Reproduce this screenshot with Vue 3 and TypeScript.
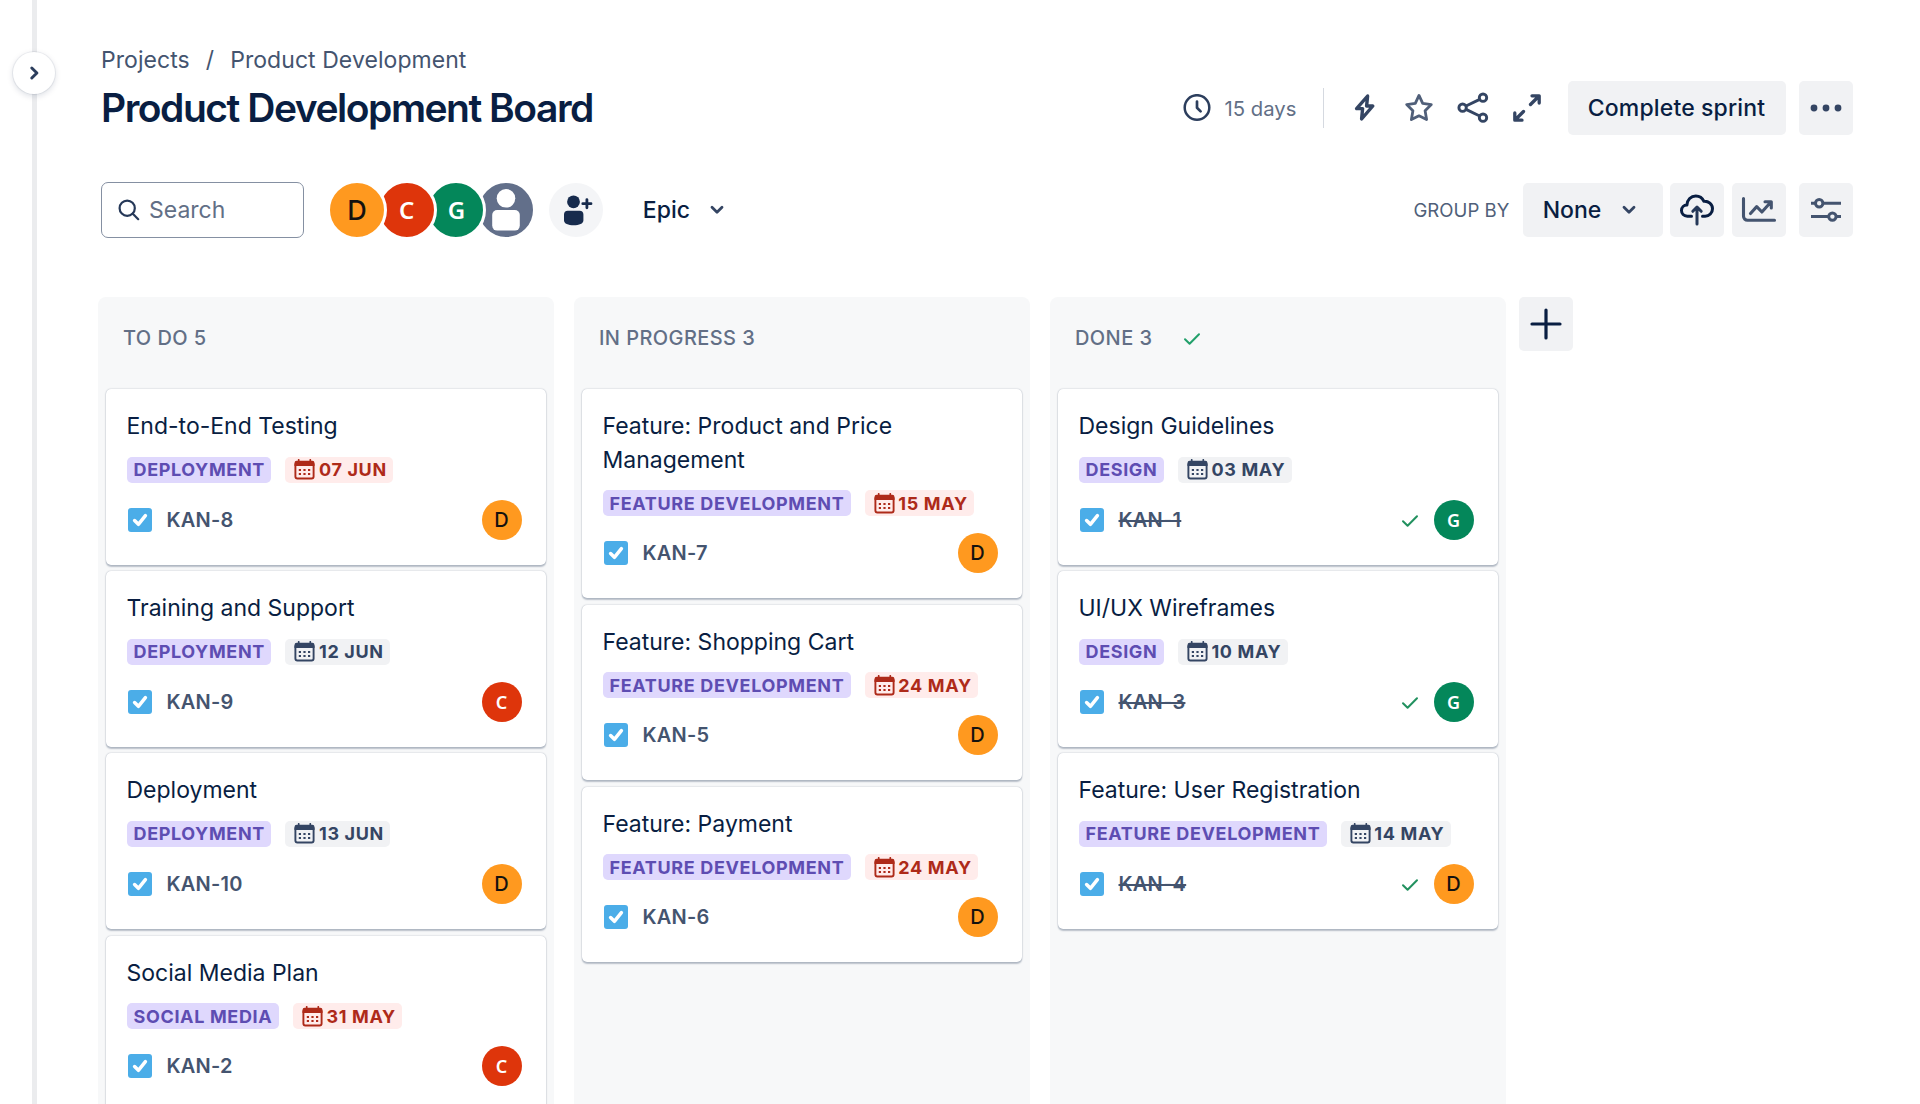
<script setup lang="ts">
interface Card {
  title: string
  epic: string
  date: string
  overdue?: boolean
  id: string
  who: 'D' | 'C' | 'G'
  done?: boolean
}
interface Column {
  name: string
  count: number
  done?: boolean
  cards: Card[]
}

const columns: Column[] = [
  {
    name: 'TO DO',
    count: 5,
    cards: [
      { title: 'End-to-End Testing', epic: 'DEPLOYMENT', date: '07 JUN', overdue: true, id: 'KAN-8', who: 'D' },
      { title: 'Training and Support', epic: 'DEPLOYMENT', date: '12 JUN', id: 'KAN-9', who: 'C' },
      { title: 'Deployment', epic: 'DEPLOYMENT', date: '13 JUN', id: 'KAN-10', who: 'D' },
      { title: 'Social Media Plan', epic: 'SOCIAL MEDIA', date: '31 MAY', overdue: true, id: 'KAN-2', who: 'C' },
    ],
  },
  {
    name: 'IN PROGRESS',
    count: 3,
    cards: [
      { title: 'Feature: Product and Price Management', epic: 'FEATURE DEVELOPMENT', date: '15 MAY', overdue: true, id: 'KAN-7', who: 'D' },
      { title: 'Feature: Shopping Cart', epic: 'FEATURE DEVELOPMENT', date: '24 MAY', overdue: true, id: 'KAN-5', who: 'D' },
      { title: 'Feature: Payment', epic: 'FEATURE DEVELOPMENT', date: '24 MAY', overdue: true, id: 'KAN-6', who: 'D' },
    ],
  },
  {
    name: 'DONE',
    count: 3,
    done: true,
    cards: [
      { title: 'Design Guidelines', epic: 'DESIGN', date: '03 MAY', id: 'KAN-1', who: 'G', done: true },
      { title: 'UI/UX Wireframes', epic: 'DESIGN', date: '10 MAY', id: 'KAN-3', who: 'G', done: true },
      { title: 'Feature: User Registration', epic: 'FEATURE DEVELOPMENT', date: '14 MAY', id: 'KAN-4', who: 'D', done: true },
    ],
  },
]
</script>

<template>
  <div class="page">
    <aside class="rail">
      <div class="rail-line"></div>
      <button class="toggle" aria-label="Expand sidebar">
        <svg width="12" height="16" viewBox="0 0 12 16"><path d="M3.8 3 8.9 8 3.800 13" fill="none" stroke="#2c3e5d" stroke-width="3" stroke-linecap="round" stroke-linejoin="round" /></svg>
      </button>
    </aside>

    <main class="main">
      <nav class="crumbs"><span>Projects</span><span class="slash">/</span><span>Product Development</span></nav>

      <header class="head">
        <h1>Product Development Board</h1>
        <div class="head-actions">
          <svg class="clock" width="28" height="28" viewBox="0 0 28 28" fill="none" stroke="#2c3e5d" stroke-linecap="round" stroke-linejoin="round"><circle cx="14" cy="13.500" r="12.300" stroke-width="2.500" /><path d="M14 7.500v6.300l3.600 3.600" stroke-width="2.700" /></svg>
          <span class="days">15 days</span>
          <i class="divider"></i>
          <svg class="bolt" width="22" height="30" viewBox="0 0 22 30" fill="none" stroke="#344563" stroke-width="3.400" stroke-linejoin="round"><path d="M13.600 3 2.600 15.600h6L7.600 26 18.800 13h-6.200z" /></svg>
          <svg class="star" width="30" height="30" viewBox="0 0 30 30" fill="none" stroke="#505f79" stroke-width="2.800" stroke-linejoin="round"><path d="m15 2.400 3.700 8 8.600 1.200-6.200 6.200 1.500 8.800L15 22.800l-7.600 3.800 1.500-8.800-6.200-6.200 8.600-1.200z" /></svg>
          <svg class="share" width="32" height="32" viewBox="0 0 32 32" fill="none" stroke="#344563" stroke-width="2.900"><circle cx="5.600" cy="15.700" r="3.700" /><circle cx="26" cy="5.700" r="3.700" /><circle cx="26" cy="25.700" r="3.700" /><path d="m9 14 13.700-6.600M9 17.400l13.700 6.600" /></svg>
          <svg class="expand" width="30" height="30" viewBox="0 0 30 30" fill="none" stroke="#344563" stroke-width="3.300" stroke-linecap="round" stroke-linejoin="round"><path d="M18.500 11.500 26 4M20 2.800h7.200V10M11.500 18.500 4 26M10 27.200H2.800V20" /></svg>
          <button class="btn sprint">Complete sprint</button>
          <button class="btn square" aria-label="More">
            <svg width="32" height="8" viewBox="0 0 32 8" fill="#344563"><circle cx="4" cy="4" r="3.400" /><circle cx="16" cy="4" r="3.400" /><circle cx="28" cy="4" r="3.400" /></svg>
          </button>
        </div>
      </header>

      <section class="tools">
        <div class="search">
          <svg width="22" height="22" viewBox="0 0 22 22" fill="none" stroke="#253858" stroke-width="2.200" stroke-linecap="round"><circle cx="9.200" cy="9.200" r="7.600" /><path d="m14.800 14.800 5.400 5.400" /></svg>
          <span>Search</span>
        </div>
        <div class="people">
          <span class="person D">D</span>
          <span class="person C">C</span>
          <span class="person G">G</span>
          <span class="person none">
            <svg width="54" height="54" viewBox="0 0 54 54" fill="#fff"><circle cx="27" cy="15.300" r="9.300" /><rect x="13.200" y="27" width="27.600" height="20.600" rx="5" /></svg>
          </span>
        </div>
        <button class="add-person" aria-label="Add people">
          <svg width="54" height="54" viewBox="0 0 54 54" fill="#172b4d"><circle cx="24.500" cy="18.800" r="6.400" /><path d="M15 31.500a3.800 3.800 0 0 1 3.800-3.800h11.800a3.800 3.800 0 0 1 3.800 3.800v6c0 3.200-4.300 4.800-9.700 4.800S15 40.700 15 37.500z" /><path d="M37.900 16.600v8.200M33.800 20.700h8.200" stroke="#172b4d" stroke-width="2.800" stroke-linecap="round" /></svg>
        </button>
        <button class="epic">
          <span>Epic</span>
          <svg width="16" height="12" viewBox="0 0 16 12"><path d="m3 3.300 5 5 5-5" fill="none" stroke="#344563" stroke-width="2.800" stroke-linecap="round" stroke-linejoin="round" /></svg>
        </button>

        <span class="group-label">GROUP BY</span>
        <button class="btn none-btn">
          <span>None</span>
          <svg width="16" height="12" viewBox="0 0 16 12"><path d="m3 3.300 5 5 5-5" fill="none" stroke="#344563" stroke-width="2.800" stroke-linecap="round" stroke-linejoin="round" /></svg>
        </button>
        <button class="btn square cloud" aria-label="Import">
          <svg width="36" height="34" viewBox="0 0 36 34" fill="none" stroke-width="3" stroke-linecap="round" stroke-linejoin="round"><path d="M12.500 23.200H8.300C4.800 23.200 2.500 20.700 2.500 17.600c0-3.300 2.500-5.400 5.400-5.500C8.100 6.800 12 3 16.800 3c3.700 0 6.600 2 8 5.200 4.700-.4 8.700 2.900 8.700 7.500 0 4.200-3.200 7.500-7.400 7.500h-2.600" stroke="#091e42" /><path d="M18 31V14.500M13.800 18.300 18 14.100l4.200 4.200" stroke="#253858" /></svg>
        </button>
        <button class="btn square chart" aria-label="Insights">
          <svg width="36" height="28" viewBox="0 0 36 28" fill="none" stroke="#44546f" stroke-width="3.100" stroke-linecap="round" stroke-linejoin="round"><path d="M2.500 2.500v17.800a4 4 0 0 0 4 4h27M9.500 17.500l6.200-6.900 5.200 5.400 9-10M24 5.700h6.300v6.300" /></svg>
        </button>
        <button class="btn square" aria-label="View settings">
          <svg width="32" height="26" viewBox="0 0 32 26" fill="none" stroke="#44546f" stroke-width="3"><path d="M1 6.200h4.400M13.200 6.200H31" /><circle cx="9.200" cy="6.200" r="3.700" /><path d="M1 19.600h17.200M26.200 19.600H31" /><circle cx="22.400" cy="19.600" r="3.700" /></svg>
        </button>
      </section>

      <section class="board">
        <div v-for="col in columns" :key="col.name" class="column">
          <div class="col-head">
            <span>{{ col.name }} {{ col.count }}</span>
            <svg v-if="col.done" class="tick" width="18" height="14" viewBox="0 0 18 14"><path d="m2 7.200 4.600 4.600L16 2.200" fill="none" stroke="#22a06b" stroke-width="2" stroke-linecap="round" stroke-linejoin="round" /></svg>
          </div>
          <article v-for="card in col.cards" :key="card.id" class="card">
            <div class="card-title">{{ card.title }}</div>
            <div class="tags">
              <span class="tag">{{ card.epic }}</span>
              <span class="due" :class="{ overdue: card.overdue }">
                <svg width="21" height="21" viewBox="0 0 21 21"><path d="M1.400 5.500v12a2 2 0 0 0 2 2h14.200a2 2 0 0 0 2-2v-12z" fill="none" stroke="currentColor" stroke-width="1.900" /><path d="M.5 7V4a2.200 2.200 0 0 1 2.200-2.200h15.600A2.200 2.200 0 0 1 20.500 4v3z" fill="currentColor" /><path d="M4.700.8v3M16.300.8v3" stroke="currentColor" stroke-width="1.700" stroke-linecap="round" /><path d="M4.800 11h2.200M9.400 11h2.200M14 11h2.200M4.800 15h2.200M9.400 15h2.200M14 15h2.200" stroke="currentColor" stroke-width="2" /></svg>
                <span>{{ card.date }}</span>
              </span>
            </div>
            <div class="foot">
              <svg width="24" height="24" viewBox="0 0 24 24"><rect width="24" height="24" rx="3" fill="#4bade8" /><path d="m6.600 12.500 3.800 3.800 7-8.600" fill="none" stroke="#fff" stroke-width="3.500" stroke-linecap="round" stroke-linejoin="round" /></svg>
              <span class="key" :class="{ struck: card.done }">{{ card.id }}</span>
              <svg v-if="card.done" class="tick" width="18" height="14" viewBox="0 0 18 14"><path d="m2 7.200 4.600 4.600L16 2.200" fill="none" stroke="#22915f" stroke-width="2" stroke-linecap="round" stroke-linejoin="round" /></svg>
              <span class="mini" :class="card.who">{{ card.who }}</span>
            </div>
          </article>
        </div>
        <button class="btn add-col" aria-label="Create column">
          <svg width="32" height="32" viewBox="0 0 32 32"><path d="M16 2v28M2 16h28" stroke="#091e42" stroke-width="3.200" stroke-linecap="round" /></svg>
        </button>
      </section>
    </main>
  </div>
</template>

<style>
body {
  margin: 0;
  background: #fff;
}
</style>

<style scoped>
.page {
  display: flex;
  width: 1920px;
  height: 1104px;
  overflow: hidden;
  background: #fff;
  color: #091e42;
  font-family: Inter, "Liberation Sans", sans-serif;
}
button {
  margin: 0;
  padding: 0;
  border: 0;
  background: none;
  color: inherit;
  font: inherit;
}
svg {
  display: block;
  flex: none;
}
.rail {
  position: relative;
  flex: none;
  width: 98px;
}
.rail-line {
  width: 5px;
  height: 100%;
  margin-left: 32px;
  background: #ebecee;
}
.toggle {
  position: absolute;
  top: 52px;
  left: 13px;
  display: flex;
  align-items: center;
  justify-content: center;
  width: 42px;
  height: 42px;
  border-radius: 50%;
  background: #fff;
  box-shadow: 0 0 0 1px rgba(9, 30, 66, 0.06), 0 2px 6px rgba(9, 30, 66, 0.15);
}
.main {
  flex: none;
  width: 1754.500px;
}
.crumbs {
  display: flex;
  height: 28px;
  margin: 46px 0 0 3px;
  color: #44546f;
  font-size: 23px;
  letter-spacing: 0.060px;
  line-height: 28px;
}
.slash {
  margin: 0 16px;
}
.head {
  display: flex;
  align-items: center;
  justify-content: space-between;
  height: 54px;
  margin: 7px 0 0 3px;
}
h1 {
  margin: 0;
  font-size: 39px;
  font-weight: 600;
  letter-spacing: -1.480px;
  line-height: 54px;
}
.head-actions {
  display: flex;
  align-items: center;
}
.days {
  width: 73px;
  margin-left: 14px;
  color: #626f86;
  font-size: 20.300px;
  white-space: nowrap;
}
.divider {
  width: 1px;
  height: 40px;
  margin: 0 30px 0 25px;
  background: #d5d9e0;
}
.star {
  margin-left: 28px;
}
.share {
  margin-left: 23px;
}
.expand {
  margin-left: 23px;
}
.btn {
  display: flex;
  align-items: center;
  justify-content: center;
  flex: none;
  height: 54px;
  border-radius: 5px;
  background: #f1f2f4;
}
.sprint {
  width: 218px;
  margin: 0 13px 0 26px;
  font-size: 23px;
  font-weight: 500;
  letter-spacing: 0.150px;
}
.square {
  width: 54px;
}
.tools {
  display: flex;
  align-items: center;
  height: 56px;
  margin: 47px 0 0 3px;
}
.search {
  box-sizing: border-box;
  display: flex;
  align-items: center;
  gap: 9px;
  width: 203px;
  height: 56px;
  padding-left: 16px;
  border: 1px solid #8590a2;
  border-radius: 7px;
  color: #626f86;
  font-size: 23px;
}
.people {
  display: flex;
  margin-left: 23px;
}
.person {
  position: relative;
  display: flex;
  align-items: center;
  justify-content: center;
  box-sizing: border-box;
  width: 60px;
  height: 60px;
  margin-right: -10.300px;
  border: 3px solid #fff;
  border-radius: 50%;
  font-size: 27px;
  font-weight: 500;
}
.person:nth-child(1) { z-index: 4; }
.person:nth-child(2) { z-index: 3; }
.person:nth-child(3) { z-index: 2; }
.person:nth-child(4) { z-index: 1; }
.D {
  background: #ff991f;
  color: #14120f;
}
.C {
  background: #de350b;
  color: #fff;
}
.G {
  background: #04875a;
  color: #fff;
}
.person.C,
.person.G {
  padding-bottom: 2px;
  font-family: "Noto Sans", sans-serif;
  font-size: 24px;
  font-weight: 600;
}
.none {
  background: #626f8a;
}
.add-person {
  width: 54px;
  height: 54px;
  margin-left: 23px;
  border-radius: 50%;
  background: #f4f5f7;
}
.epic {
  display: flex;
  align-items: center;
  gap: 19px;
  margin-left: 40px;
  font-size: 23px;
  font-weight: 500;
}
.group-label {
  width: 96px;
  margin-left: auto;
  color: #505f79;
  font-size: 18.600px;
  white-space: nowrap;
}
.none-btn {
  box-sizing: border-box;
  width: 140px;
  margin-left: 13px;
  padding-right: 5px;
  gap: 20px;
  font-size: 23px;
  font-weight: 500;
}
.cloud {
  margin-left: 7px;
}
.chart {
  margin: 0 13px 0 8px;
}
.board {
  display: flex;
  gap: 20.500px;
  height: 807px;
  margin-top: 59px;
}
.column {
  box-sizing: border-box;
  flex: none;
  width: 455.500px;
  padding: 0 8px;
  border-radius: 8px 8px 0 0;
  background: #f7f8f9;
}
.col-head {
  display: flex;
  align-items: center;
  height: 82px;
  margin-bottom: 10px;
  padding-left: 17px;
  color: #626f86;
  font-size: 20px;
  font-weight: 500;
  letter-spacing: 0.420px;
}
.col-head .tick {
  margin: 2px 0 0 31px;
}
.card {
  box-sizing: border-box;
  width: 439.500px;
  margin-bottom: 6.700px;
  padding: 21px 24px 25px 20.500px;
  border-radius: 5px;
  background: #fff;
  box-shadow: 0 1.500px 1.500px rgba(9, 30, 66, 0.25), 0 0 1.500px rgba(9, 30, 66, 0.3);
}
.card-title {
  font-size: 23px;
  line-height: 33.500px;
}
.tags {
  display: flex;
  gap: 14px;
  margin-top: 13px;
}
.tag,
.due {
  display: flex;
  align-items: center;
  height: 26px;
  border-radius: 5px;
  font-size: 18px;
  font-weight: 700;
  letter-spacing: 0.650px;
  white-space: nowrap;
}
.tag {
  padding: 0 6.500px 0 7px;
  background: #dfd8fd;
  color: #5e4db2;
}
.due {
  gap: 3.500px;
  padding: 0 6.500px 0 9px;
  background: #f1f2f4;
  color: #344563;
}
.due.overdue {
  background: #ffeceb;
  color: #ae2a19;
}
.foot {
  display: flex;
  align-items: center;
  height: 40px;
  margin-top: 17px;
  padding-left: 1px;
}
.key {
  margin: 0 auto 0 15px;
  color: #44546f;
  font-size: 20px;
  font-weight: 600;
  letter-spacing: 0.250px;
}
.struck {
  text-decoration: line-through;
}
.foot .tick {
  margin: 3px 15px 0 0;
}
.mini {
  display: flex;
  align-items: center;
  justify-content: center;
  width: 40px;
  height: 40px;
  border-radius: 50%;
  font-size: 20px;
  font-weight: 500;
}
.mini.C,
.mini.G {
  font-family: "Noto Sans", sans-serif;
  font-size: 18px;
  font-weight: 600;
}
.add-col {
  width: 54px;
  margin-left: -7px;
}
</style>
